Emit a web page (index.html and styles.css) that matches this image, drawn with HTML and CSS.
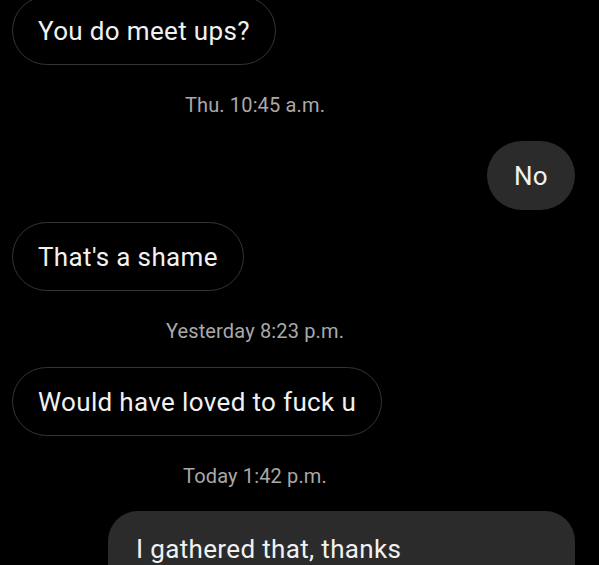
FILE: index.html
```html
<!DOCTYPE html>
<html lang="en">
<head>
<meta charset="utf-8">
<title>Chat</title>
<link rel="stylesheet" href="styles.css">
</head>
<body>
<main class="thread">
  <div class="msg msg-in first"><span>You do meet ups?</span></div>
  <div class="stamp">Thu. 10:45 a.m.</div>
  <div class="msg msg-out no"><span>No</span></div>
  <div class="msg msg-in after-out"><span>That's a shame</span></div>
  <div class="stamp">Yesterday 8:23 p.m.</div>
  <div class="msg msg-in"><span>Would have loved to fuck u</span></div>
  <div class="stamp">Today 1:42 p.m.</div>
  <div class="msg msg-out long"><span>I gathered that, thanks</span></div>
</main>
</body>
</html>
```
FILE: styles.css
```css
html, body {
  margin: 0;
  padding: 0;
  background: #000;
  overflow: hidden;
  height: 565px;
}

.thread {
  display: flex;
  flex-direction: column;
  padding: 0 24px 0 12px;
  margin-top: -4px;
  font-family: Roboto, "Noto Sans", sans-serif;
}

.msg {
  box-sizing: border-box;
  height: 69px;
  border-radius: 35px;
  display: flex;
  align-items: center;
  font-size: 26px;
  letter-spacing: 0.35px;
  line-height: 30px;
  color: #f1f1f1;
  margin-top: 27px;
}

.msg-in {
  align-self: flex-start;
  border: 1px solid #343434;
  padding: 0 25px;
  background: #000;
}

.msg-out {
  align-self: flex-end;
  background: #2b2b2b;
  padding: 0 27px;
}

.first {
  margin-top: 0;
}

.after-out {
  margin-top: 12px;
}

.stamp {
  font-size: 20px;
  letter-spacing: 0.15px;
  line-height: 20px;
  color: #a9a9a9;
  text-align: center;
  padding-right: 77px;
  margin-top: 30px;
  margin-bottom: -1px;
}

.long {
  width: 467px;
  height: 120px;
  align-items: flex-start;
  padding: 23px 28px;
  border-radius: 30px;
  margin-top: 26px;
}
```
